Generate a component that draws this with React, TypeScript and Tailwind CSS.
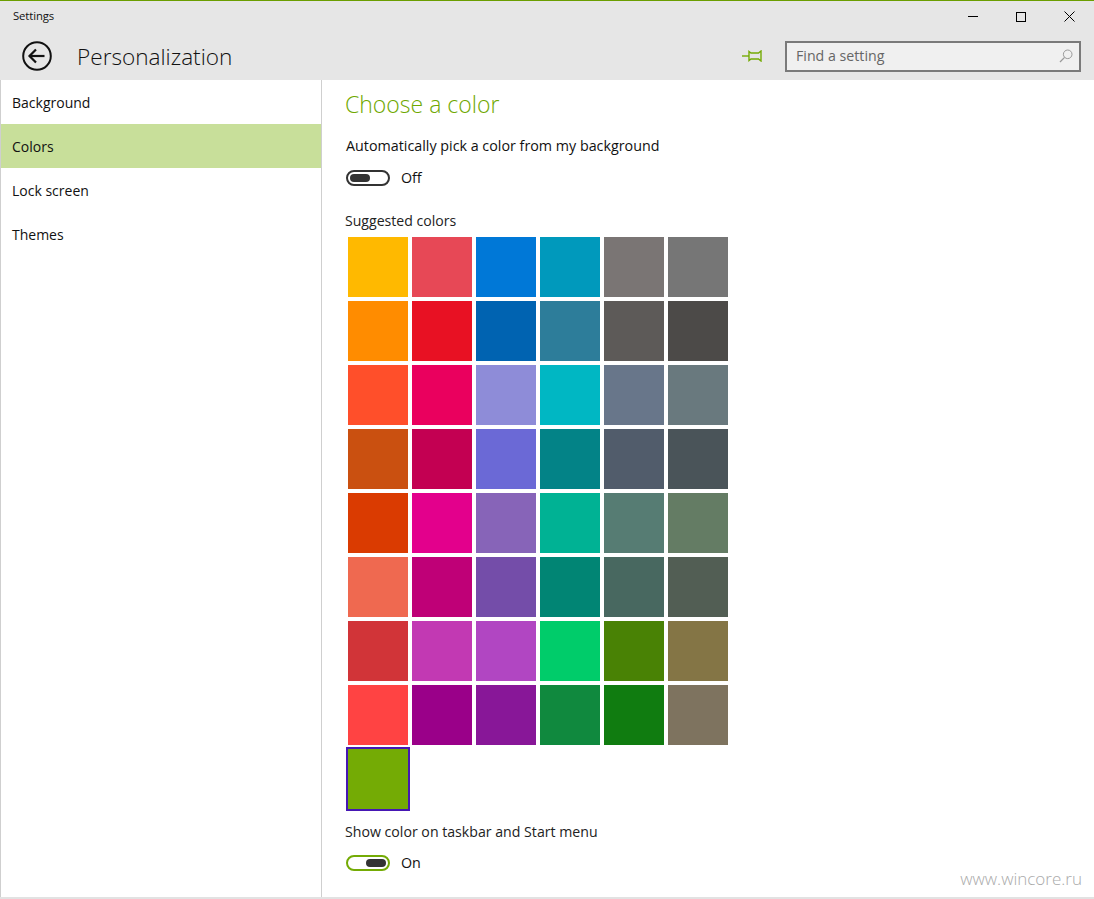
import React from 'react'

const colors = [
  '#ffb900', '#e74856', '#0078d7', '#0099bc', '#7a7574', '#767676',
  '#ff8c00', '#e81123', '#0063b1', '#2d7d9a', '#5d5a58', '#4c4a48',
  '#ff4f2a', '#ea005e', '#8e8cd8', '#00b7c3', '#68768a', '#69797e',
  '#ca5010', '#c30052', '#6b69d6', '#038387', '#515c6b', '#4a5459',
  '#da3b01', '#e3008c', '#8764b8', '#00b294', '#567c73', '#647c64',
  '#ef6950', '#bf0077', '#744da9', '#018574', '#486860', '#525e54',
  '#d13438', '#c239b3', '#b146c2', '#00cc6a', '#498205', '#847545',
  '#ff4343', '#9a0089', '#881798', '#10893e', '#107c10', '#7e735f',
]

const navItems = ['Background', 'Colors', 'Lock screen', 'Themes']

function BackIcon() {
  return (
    <svg width="30" height="30" viewBox="0 0 30 30" fill="none" stroke="#111" strokeWidth="2">
      <circle cx="15" cy="15" r="13.8" />
      <path d="M7.5 15H22.5" strokeWidth="2.2" />
      <path d="M14 8.5L7.5 15L14 21.5" strokeWidth="2.2" />
    </svg>
  )
}

function PinIcon() {
  return (
    <svg width="20" height="12" viewBox="0 0 20 12" fill="none" stroke="#74ab05" strokeWidth="1.4">
      <path d="M0 6H7" />
      <path d="M7 1.5L9 3H16.5L19 1V11L16.5 9H9L7 10.5Z" />
    </svg>
  )
}

function SearchIcon() {
  return (
    <svg width="14" height="14" viewBox="0 0 14 14" fill="none" stroke="#9a9a9a" strokeWidth="1">
      <circle cx="8.7" cy="5.3" r="4.3" />
      <path d="M5.6 8.4L1 13" strokeWidth="1.3" />
    </svg>
  )
}

function Toggle({ on, label }: { on: boolean; label: string }) {
  return (
    <div className="flex items-center gap-[11px]">
      <div
        className={`w-[44px] h-[16px] rounded-full border-2 flex items-center px-[2px] ${
          on ? 'border-[#74ab05] justify-end' : 'border-[#333] justify-start'
        }`}
      >
        <div className="w-[20px] h-[8px] rounded-full bg-[#333]" />
      </div>
      <span className="text-[14.3px] leading-[20px] text-[#111]">{label}</span>
    </div>
  )
}

export default function App() {
  return (
    <div
      className="w-[1094px] h-[899px] flex flex-col bg-white overflow-hidden border-b-2 border-[#e2e2e2]"
      style={{ fontFamily: '"Open Sans", "Noto Sans", sans-serif' }}
    >
      <header className="h-[80px] shrink-0 bg-[#e6e6e6] border-t border-[#6b9e00] flex flex-col">
        <div className="h-[31px] flex items-center justify-between pl-[13px] pr-px">
          <span className="text-[11.3px] text-[#111] tracking-[-0.1px]">Settings</span>
          <div className="flex items-center">
            <div className="w-[48px] h-[31px] flex items-center justify-center">
              <div className="w-[10px] h-px bg-black" />
            </div>
            <div className="w-[48px] h-[31px] flex items-center justify-center">
              <div className="w-[10px] h-[10px] border border-black" />
            </div>
            <div className="w-[48px] h-[31px] flex items-center justify-center">
              <svg width="11" height="11" viewBox="0 0 11 11" stroke="#000" strokeWidth="1">
                <path d="M0.5 0.5L10.5 10.5M10.5 0.5L0.5 10.5" />
              </svg>
            </div>
          </div>
        </div>
        <div className="flex-1 flex items-center pl-[22px] pr-[13px]">
          <BackIcon />
          <h1 className="ml-[25px] text-[22.6px] font-light text-[#111] mt-[2px]">Personalization</h1>
          <div className="ml-auto mr-[23px] flex">
            <PinIcon />
          </div>
          <div className="w-[296px] h-[31px] border-2 border-[#7a7a7a] bg-[#f0f0f0] flex items-center justify-between pl-[9px] pr-[6px]">
            <span className="text-[14.2px] leading-[20px] mb-[1px] text-[#666]">Find a setting</span>
            <SearchIcon />
          </div>
        </div>
      </header>

      <div className="flex-1 flex min-h-0">
        <nav className="w-[322px] shrink-0 border-l border-r border-[#cfcfcf]">
          {navItems.map(item => (
            <div
              key={item}
              className={`h-[44px] flex items-center pl-[11px] text-[14px] text-[#111] ${
                item === 'Colors' ? 'bg-[#c8df9a]' : ''
              }`}
            >
              {item}
            </div>
          ))}
        </nav>

        <main className="flex-1 pl-[23px] pt-[9px] relative">
          <h2 className="text-[23px] leading-[30px] font-light text-[#6fa800]">Choose a color</h2>
          <p className="mt-[17px] ml-px text-[14.3px] leading-[20px] text-[#111]">
            Automatically pick a color from my background
          </p>
          <div className="mt-[12px] ml-px">
            <Toggle on={false} label="Off" />
          </div>
          <p className="mt-[23px] text-[14.1px] leading-[20px] text-[#222]">Suggested colors</p>
          <div className="mt-[6px] ml-[3px] grid grid-cols-[repeat(6,60px)] auto-rows-[60px] gap-[4px]">
            {colors.map((c, i) => (
              <div key={i} style={{ backgroundColor: c }} />
            ))}
            <div className="w-[64px] h-[64px] -m-[2px] bg-[#74ab05] border-2 border-[#4617b4]" />
          </div>
          <p className="mt-[13px] text-[14.15px] leading-[20px] text-[#222]">Show color on taskbar and Start menu</p>
          <div className="mt-[11px] ml-px">
            <Toggle on label="On" />
          </div>
          <span className="absolute right-[12px] bottom-[6px] text-[17px] font-light text-[#aaa]">
            www.wincore.ru
          </span>
        </main>
      </div>
    </div>
  )
}
